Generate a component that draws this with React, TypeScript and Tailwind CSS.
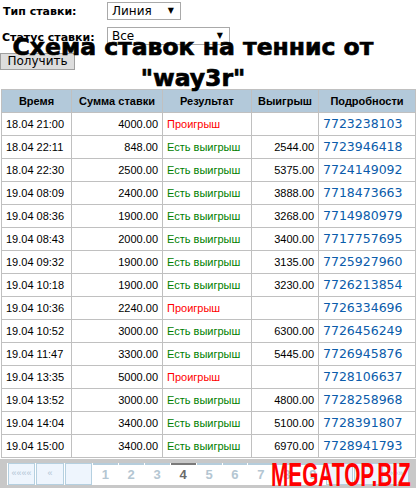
const rows: [string, string, boolean, string, string][] = [
  ["18.04 21:00", "4000.00", false, "", "7723238103"],
  ["18.04 22:11", "848.00", true, "2544.00", "7723946418"],
  ["18.04 22:30", "2500.00", true, "5375.00", "7724149092"],
  ["19.04 08:09", "2400.00", true, "3888.00", "7718473663"],
  ["19.04 08:36", "1900.00", true, "3268.00", "7714980979"],
  ["19.04 08:43", "2000.00", true, "3400.00", "7717757695"],
  ["19.04 09:32", "1900.00", true, "3135.00", "7725927960"],
  ["19.04 10:18", "1900.00", true, "3230.00", "7726213854"],
  ["19.04 10:36", "2240.00", false, "", "7726334696"],
  ["19.04 10:52", "3000.00", true, "6300.00", "7726456249"],
  ["19.04 11:47", "3300.00", true, "5445.00", "7726945876"],
  ["19.04 13:35", "5000.00", false, "", "7728106637"],
  ["19.04 13:52", "3000.00", true, "4800.00", "7728258968"],
  ["19.04 14:04", "3400.00", true, "5100.00", "7728391807"],
  ["19.04 15:00", "3400.00", true, "6970.00", "7728941793"],
];

const cell = "border border-[#c0c0c0] h-[23px] p-0";

function FakeSelect({ value, width }: { value: string; width: string }) {
  return (
    <div
      className={`${width} h-[18px] border border-[#a9a9a9] bg-white flex items-center justify-between pl-[4px] pr-[6px] text-[12px] leading-none font-['DejaVu_Sans',sans-serif] text-black`}
    >
      <span>{value}</span>
      <span className="text-[8px]">▼</span>
    </div>
  );
}

export default function App() {
  return (
    <div className="w-[416px] h-[488px] overflow-hidden bg-white relative font-['Liberation_Sans',Arial,sans-serif]">
      <div className="h-[70px] flex flex-col items-start">
        <div className="flex items-center h-[20px] pt-[1px]">
          <span className="w-[107px] pl-[3px] pt-[3px] text-[11px] font-bold font-['DejaVu_Sans',sans-serif]">
            Тип ставки:
          </span>
          <FakeSelect value="Линия" width="w-[74px]" />
        </div>
        <div className="flex items-center h-[18px] mt-[7px]">
          <span className="w-[107px] pl-[2px] pt-[5px] text-[11px] font-bold font-['DejaVu_Sans',sans-serif]">
            Статус ставки:
          </span>
          <FakeSelect value="Все" width="w-[123px]" />
        </div>
        <div className="mt-[8px] h-[17px] w-[75px] border border-[#a0a0a0] bg-[#dddddd] text-[12px] leading-[15px] font-['DejaVu_Sans',sans-serif] flex items-center justify-center">
          Получить
        </div>
      </div>

      <h1 className="-mt-[38px] h-[57px] w-[386px] text-center text-[23.5px] leading-[31px] font-bold font-['DejaVu_Sans',sans-serif] text-black [-webkit-text-stroke:0.7px_black]">
        Схема ставок на теннис от "way3r"
      </h1>

      <table className="ml-[1px] w-[415px] table-fixed border-collapse text-[11px]">
        <colgroup>
          <col className="w-[70px]" />
          <col className="w-[91px]" />
          <col className="w-[89px]" />
          <col className="w-[67px]" />
          <col />
        </colgroup>
        <thead>
          <tr className="bg-[#b3c9da] font-bold">
            <td className={`${cell} text-center`}>Время</td>
            <td className={`${cell} text-center`}>Сумма ставки</td>
            <td className={`${cell} text-center`}>Результат</td>
            <td className={`${cell} text-center`}>Выигрыш</td>
            <td className={`${cell} text-center`}>Подробности</td>
          </tr>
        </thead>
        <tbody>
          {rows.map(([time, sum, win, prize, id]) => (
            <tr key={id}>
              <td className={`${cell} pl-[4px]`}>{time}</td>
              <td className={`${cell} text-right pr-[4px]`}>{sum}</td>
              <td className={`${cell} pl-[4px] ${win ? "text-[#008000]" : "text-[#ff0000]"}`}>
                {win ? "Есть выигрыш" : "Проигрыш"}
              </td>
              <td className={`${cell} text-right pr-[4px]`}>{prize}</td>
              <td className={`${cell} pl-[4px] text-[12.5px] text-[#0b5cab] font-['DejaVu_Sans',sans-serif]`}>
                {id}
              </td>
            </tr>
          ))}
        </tbody>
      </table>

      <div className="mt-[1px] h-[30px] bg-[#c8c8c8] px-[7px] pt-[4px]">
        <div className="h-[22px] bg-white flex items-stretch gap-[1px] pl-[1px]">
          <div className="w-[27px] border border-[#b5d0e0] bg-[#eef5fd] text-[#b0c4d4] text-[9px] flex items-center justify-center">
            ««««
          </div>
          <div className="w-[28px] border border-[#b5d0e0] bg-[#eef5fd] text-[#b0c4d4] text-[9px] flex items-center justify-center">
            «
          </div>
          <div className="w-[27px] border border-[#b5d0e0] bg-[#eef5fd]" />
          {["1", "2", "3", "4", "5", "6", "7", "8", "9"].map((n) => (
            <div
              key={n}
              className={`w-[25px] border-t-2 flex items-center justify-center text-[13px] font-bold ${
                n === "4" ? "border-[#7a7a7a] text-[#6a6a6a]" : "border-[#b5cddc] text-[#b4c6d2]"
              }`}
            >
              {n}
            </div>
          ))}
          <div className="w-[27px] border border-[#b5d0e0] bg-[#eef5fd]" />
          <div className="w-[27px] border border-[#b5d0e0] bg-[#eef5fd]" />
          <div className="w-[27px] border border-[#b5d0e0] bg-[#eef5fd] text-[#b0c4d4] text-[9px] flex items-center justify-center">
            »»»
          </div>
        </div>
      </div>

      <div className="absolute left-[271px] bottom-[-3px] text-[#ff0000] text-[33px] leading-[33px] font-bold origin-left scale-x-[0.63] whitespace-nowrap">
        MEGATOP.BIZ
      </div>
    </div>
  );
}
